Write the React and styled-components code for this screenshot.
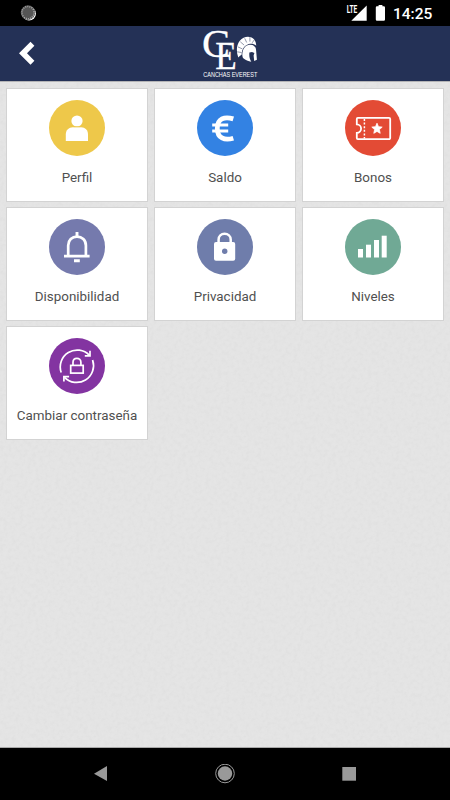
import React from 'react';
import styled, { createGlobalStyle } from 'styled-components';

const GlobalStyle = createGlobalStyle`
  * {
    box-sizing: border-box;
  }

  body {
    margin: 0;
    font-family: Roboto, 'Liberation Sans', sans-serif;
  }
`;

const grain = `url("data:image/svg+xml,%3Csvg xmlns='http://www.w3.org/2000/svg' width='150' height='150'%3E%3Cfilter id='n'%3E%3CfeTurbulence type='fractalNoise' baseFrequency='.25' numOctaves='2' stitchTiles='stitch'/%3E%3CfeColorMatrix values='0 0 0 0 .4 0 0 0 0 .4 0 0 0 0 .4 .13 0 0 0 -.04'/%3E%3C/filter%3E%3Crect width='150' height='150' filter='url(%23n)'/%3E%3C/svg%3E")`;

const Screen = styled.div`
  display: flex;
  flex-direction: column;
  width: 450px;
  height: 800px;
  overflow: hidden;
`;

const StatusBar = styled.div`
  display: flex;
  align-items: center;
  justify-content: space-between;
  height: 26px;
  padding: 0 17px 0 20px;
  background: #000;
  color: #fff;
`;

const StatusIcons = styled.div`
  display: flex;
  align-items: center;
`;

const Clock = styled.span`
  width: 40px;
  margin-left: 7px;
  padding-top: 2px;
  font-size: 15.5px;
  font-weight: 500;
  line-height: 24px;
  white-space: nowrap;
`;

const Header = styled.header`
  display: grid;
  grid-template-columns: 60px 1fr 60px;
  height: 55px;
  background: #243156;
`;

const BackButton = styled.button`
  padding: 0;
  border: 0;
  background: none;
`;

const Logo = styled.div`
  display: flex;
  justify-content: center;
`;

const Icon = styled.svg`
  display: block;
  flex: none;
`;

const Content = styled.main`
  flex: 1;
  padding: 6px;
  border-top: 1px solid #b4b4b6;
  border-bottom: 1px solid #a8a8a8;
  background: #e5e5e5 ${grain};
`;

const Grid = styled.div`
  display: grid;
  grid-template-columns: repeat(3, 142px);
  grid-auto-rows: 114px;
  gap: 5px 6px;
`;

const Card = styled.div`
  display: flex;
  flex-direction: column;
  align-items: center;
  padding-top: 11px;
  border: 1px solid #d3d3d3;
  background: #fff;
`;

const Disc = styled.div`
  width: 56px;
  height: 56px;
  border-radius: 50%;
  background: ${({ $color }) => $color};
`;

const Label = styled.span`
  margin-top: 11px;
  color: #505050;
  font-size: 13.4px;
  line-height: 21px;
  white-space: nowrap;
`;

const NavBar = styled.nav`
  display: flex;
  align-items: center;
  justify-content: space-between;
  height: 52px;
  padding: 0 91px 0 90px;
  background: #000;
`;

const PersonIcon = () => (
  <Icon width="56" height="56" fill="#fff">
    <circle cx="28" cy="21" r="5.6" />
    <path d="M16.800 41v-6.500c0-4.400 3-7.300 7.200-7.300h8c4.200 0 7 2.900 7 7.300V41z" />
    <path d="M24.500 26.700h7" stroke="#eec84a" strokeWidth=".7" />
  </Icon>
);

const EuroIcon = () => (
  <Icon width="56" height="56" fill="none" stroke="#fff">
    <path d="M36.300 18.900C27.500 16.200 20.300 18.600 20.300 28.400S27.500 40.800 36.300 38.200" strokeWidth="4.800" />
    <path d="M15.200 25h16M15.200 30.900h16" strokeWidth="3" />
  </Icon>
);

const TicketIcon = () => (
  <Icon width="56" height="56" fill="none" stroke="#fff" strokeWidth="1.8">
    <path d="M12.800 17.900H44a1.200 1.200 0 0 1 1.200 1.200v18.800a1.200 1.200 0 0 1-1.200 1.200H12.800a1 1 0 0 1-1-1v-5.200a4.300 4.300 0 0 0 0-8.600v-5.400a1 1 0 0 1 1-1z" />
    <path d="M19.400 19v19.500" strokeWidth="1.500" strokeDasharray="2 1.600" />
    <path d="M32 23.200l1.500 3.500 3.700.4-2.800 2.500.8 3.700-3.200-1.900-3.200 1.900.8-3.700-2.800-2.500 3.700-.4z" fill="#fff" strokeWidth=".8" strokeLinejoin="round" />
  </Icon>
);

const BellIcon = () => (
  <Icon width="56" height="56" fill="none" stroke="#fff" strokeWidth="2.700">
    <path d="M19.200 37V26.500c0-5.300 3.800-8.900 8.800-8.900s8.900 3.600 8.900 8.900V37M15 37.200h25.600" />
    <path d="M28 13v4M25 41.700h5.800" strokeWidth="2.900" />
  </Icon>
);

const PadlockIcon = () => (
  <Icon width="56" height="56" fill="none">
    <path d="M21.600 24v-3.400c0-3.500 2.600-5.800 6-5.800s6.100 2.300 6.100 5.800V24" stroke="#fff" strokeWidth="2.500" />
    <rect x="17" y="22.900" width="21.200" height="18.800" rx="2" fill="#fff" />
    <circle cx="27.700" cy="32.200" r="2.700" fill="#6f7dab" />
  </Icon>
);

const BarsIcon = () => (
  <Icon width="56" height="56" fill="#fff">
    <rect x="13" y="30" width="5" height="8.500" />
    <rect x="21" y="25.700" width="5" height="12.800" />
    <rect x="29" y="21" width="5" height="17.500" />
    <rect x="36.700" y="16.700" width="5" height="21.800" />
  </Icon>
);

const RenewLockIcon = () => (
  <Icon width="56" height="56" fill="none" stroke="#fff" strokeWidth="1.700">
    <path d="M12.200 34.500A16.900 16.900 0 0 1 40.400 17.300M43.600 22A16.900 16.900 0 0 1 15.500 39.300" />
    <path d="M41 12.800v5h-5.200M14.900 43.600v-5h5.200" />
    <rect x="21.700" y="27.400" width="12.500" height="7.700" />
    <path d="M24 27.400V24.300c0-2.300 1.700-3.900 3.900-3.900s4 1.600 4 3.900v3.100" />
  </Icon>
);

const items = [
  { label: 'Perfil', color: '#eec84a', icon: <PersonIcon /> },
  { label: 'Saldo', color: '#3382e3', icon: <EuroIcon /> },
  { label: 'Bonos', color: '#e34b35', icon: <TicketIcon /> },
  { label: 'Disponibilidad', color: '#757aad', icon: <BellIcon /> },
  { label: 'Privacidad', color: '#6f7dab', icon: <PadlockIcon /> },
  { label: 'Niveles', color: '#70a995', icon: <BarsIcon /> },
  { label: 'Cambiar contraseña', color: '#8334a1', icon: <RenewLockIcon /> },
];

const ClubLogo = () => (
  <Icon width="70" height="55" viewBox="190 26 70 55" fill="#fff" overflow="visible">
    <g fontFamily="'Liberation Serif', serif" stroke="#fff" strokeWidth=".3">
      <text x="202" y="57.100" fontSize="40" textLength="28" lengthAdjust="spacingAndGlyphs">C</text>
      <text x="215.300" y="68.800" fontSize="40.500" textLength="21.500" lengthAdjust="spacingAndGlyphs">E</text>
    </g>
    {/* crest, then helmet */}
    <path d="M238.300 57.600c-2.200-6-2-12.500 1.500-16.800 3.800-4.600 10.200-5.400 13.900-1.700 1.700 1.700 2.500 4 2.500 6.600-2-1.800-4.600-2.500-7.400-1.600-4.400 1.400-6.900 5.200-7.200 10.600-1.400.6-2.500 1.600-3.300 2.900z" />
    <path d="M242.300 54.700c.2-5.400 2.600-9.200 6.800-9.900 4-.7 6.700 1.700 7 5.500l.8 9.400-2.700 1.300-.6-5.600.8-2.400-2.400-1-2.600.5c-.4 3.500.2 6.300 1.900 9.300-3-.4-5.800-1.600-8-3.500-.6-.8-1-2-1-3.600z" />
    <path d="M237.200 51.800l4.300.7M237.900 46.900l4.500 2M240.300 41.800l3.800 3.300M244.700 38.300l2 4.200M249.900 37.200v4.400M254.200 40l-2 2.800" stroke="#243156" strokeWidth=".5" />
    <text x="203.300" y="76.900" fontFamily="'Liberation Sans', sans-serif" fontSize="6.300" textLength="54" lengthAdjust="spacingAndGlyphs">CANCHAS EVEREST</text>
  </Icon>
);

function App() {
  return (
    <>
      <GlobalStyle />
      <Screen>
        <StatusBar>
          <Icon width="17" height="26" viewBox="20 0 17 26">
            <circle cx="29" cy="13.600" r="7" fill="#fff" />
            <circle cx="28" cy="12.600" r="7.300" fill="#555" />
            <circle cx="28" cy="12.600" r="6.100" fill="none" stroke="#aaa" strokeWidth="1.500" strokeDasharray="1 1.100" />
          </Icon>
          <StatusIcons>
            <Icon width="40" height="26" viewBox="346 0 40 26" fill="#fff">
              <text x="346.700" y="12.800" fontSize="10.300" fontWeight="700" textLength="10.600" lengthAdjust="spacingAndGlyphs">LTE</text>
              <path d="M351.300 20.700L366.700 5.500v15.200z" />
              <path d="M377 6.300h1.600V5h3.800v1.300h1.400a1.200 1.200 0 0 1 1.200 1.200v12a1.200 1.200 0 0 1-1.200 1.200H377a1.200 1.200 0 0 1-1.200-1.200v-12a1.200 1.200 0 0 1 1.200-1.200z" />
            </Icon>
            <Clock>14:25</Clock>
          </StatusIcons>
        </StatusBar>
        <Header>
          <BackButton aria-label="Volver">
            <Icon width="60" height="55" viewBox="0 26 60 55" fill="#fff">
              <path d="M19 53.300L30.500 41.800 34.400 45.800 27 53.300 34.400 60.800 30.500 64.800z" />
            </Icon>
          </BackButton>
          <Logo>
            <ClubLogo />
          </Logo>
        </Header>
        <Content>
          <Grid>
            {items.map((item) => (
              <Card key={item.label}>
                <Disc $color={item.color}>{item.icon}</Disc>
                <Label>{item.label}</Label>
              </Card>
            ))}
          </Grid>
        </Content>
        <NavBar>
          <Icon width="20" height="20" fill="#999">
            <path d="M4 9.700L17 2v15z" />
          </Icon>
          <Icon width="20" height="20" fill="#999">
            <circle cx="10" cy="9.500" r="7.200" />
            <circle cx="10" cy="9.500" r="9.300" fill="none" stroke="#999" strokeWidth="1" />
          </Icon>
          <Icon width="20" height="20" fill="#999">
            <rect x="3.300" y="3" width="13.700" height="13.700" />
          </Icon>
        </NavBar>
      </Screen>
    </>
  );
}

export default App;
